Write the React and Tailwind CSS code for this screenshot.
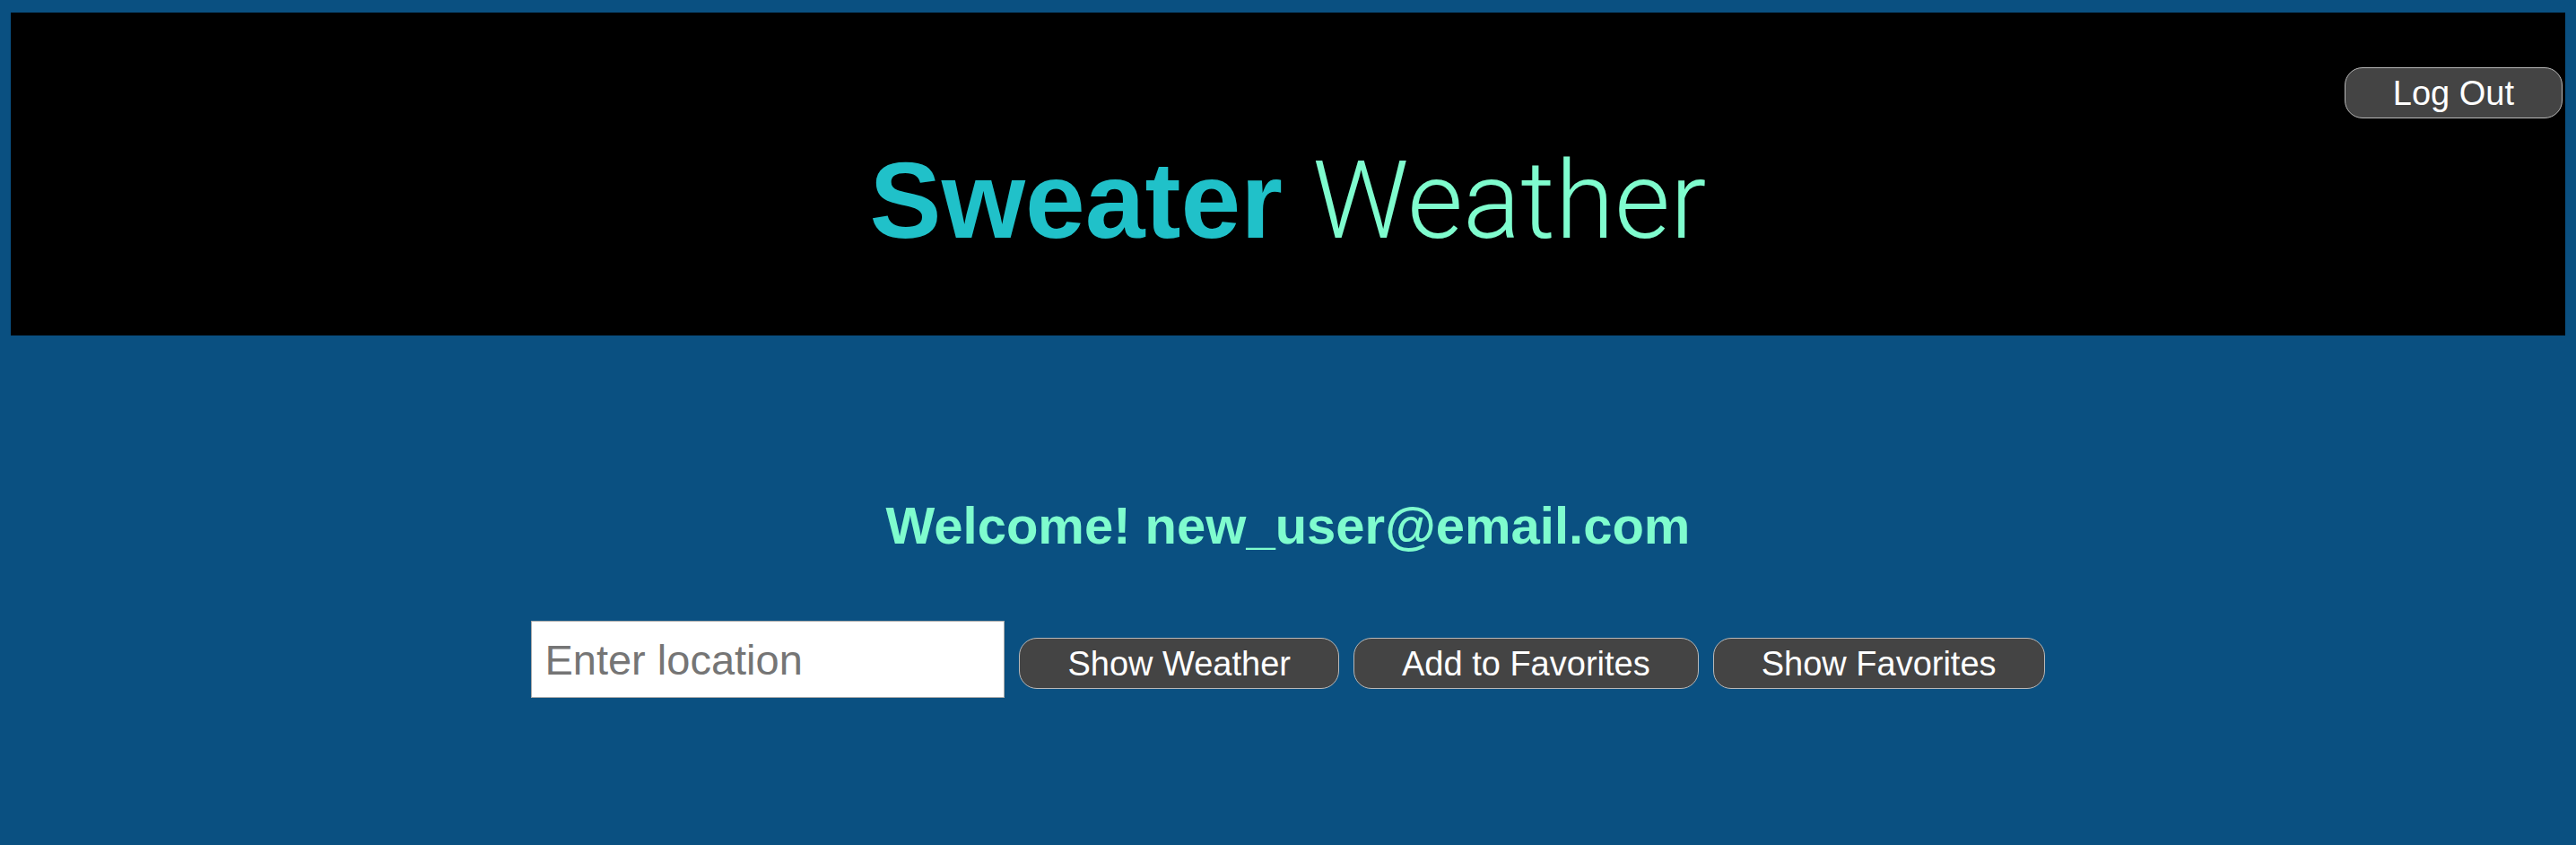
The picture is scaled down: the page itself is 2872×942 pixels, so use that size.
import React from 'react';

const buttonClass =
  "h-[57px] px-[53px] rounded-[20px] border border-[#b8b8b8] bg-[#444444] text-white text-[38px] leading-none flex items-center justify-center whitespace-nowrap";

const App = () => {
  return (
    <div className="min-h-screen w-full bg-[#0a5081] pt-[14px] px-[12px] font-['Liberation_Sans',Arial,sans-serif]">
      {/* Header */}
      <div className="h-[360px] bg-black flex flex-col">
        <div className="flex justify-end pt-[61px] pr-[3px]">
          <button className={buttonClass}>Log Out</button>
        </div>
        <h1 className="mt-[31px] text-center text-[120px] leading-none">
          <span className="font-bold text-[#20c1c9]">Sweater</span>{' '}
          <span className="font-light text-[#7ffcce] font-['Roboto',sans-serif]">Weather</span>
        </h1>
      </div>

      {/* Main */}
      <div className="flex flex-col items-center">
        <h2 className="mt-[183px] text-[58px] leading-none font-bold text-[#7ffcce]">
          Welcome! new_user@email.com
        </h2>
        <div className="mt-[77px] flex items-start gap-[16px]">
          <input
            type="text"
            placeholder="Enter location"
            className="w-[528px] h-[86px] bg-white border border-[#aaaaaa] px-[14px] text-[47px] text-black placeholder:text-[#757575] outline-none"
          />
          <div className="mt-[19px] flex gap-[16px]">
            <button className={buttonClass}>Show Weather</button>
            <button className={buttonClass}>Add to Favorites</button>
            <button className={buttonClass}>Show Favorites</button>
          </div>
        </div>
      </div>
    </div>
  );
};

export default App;
